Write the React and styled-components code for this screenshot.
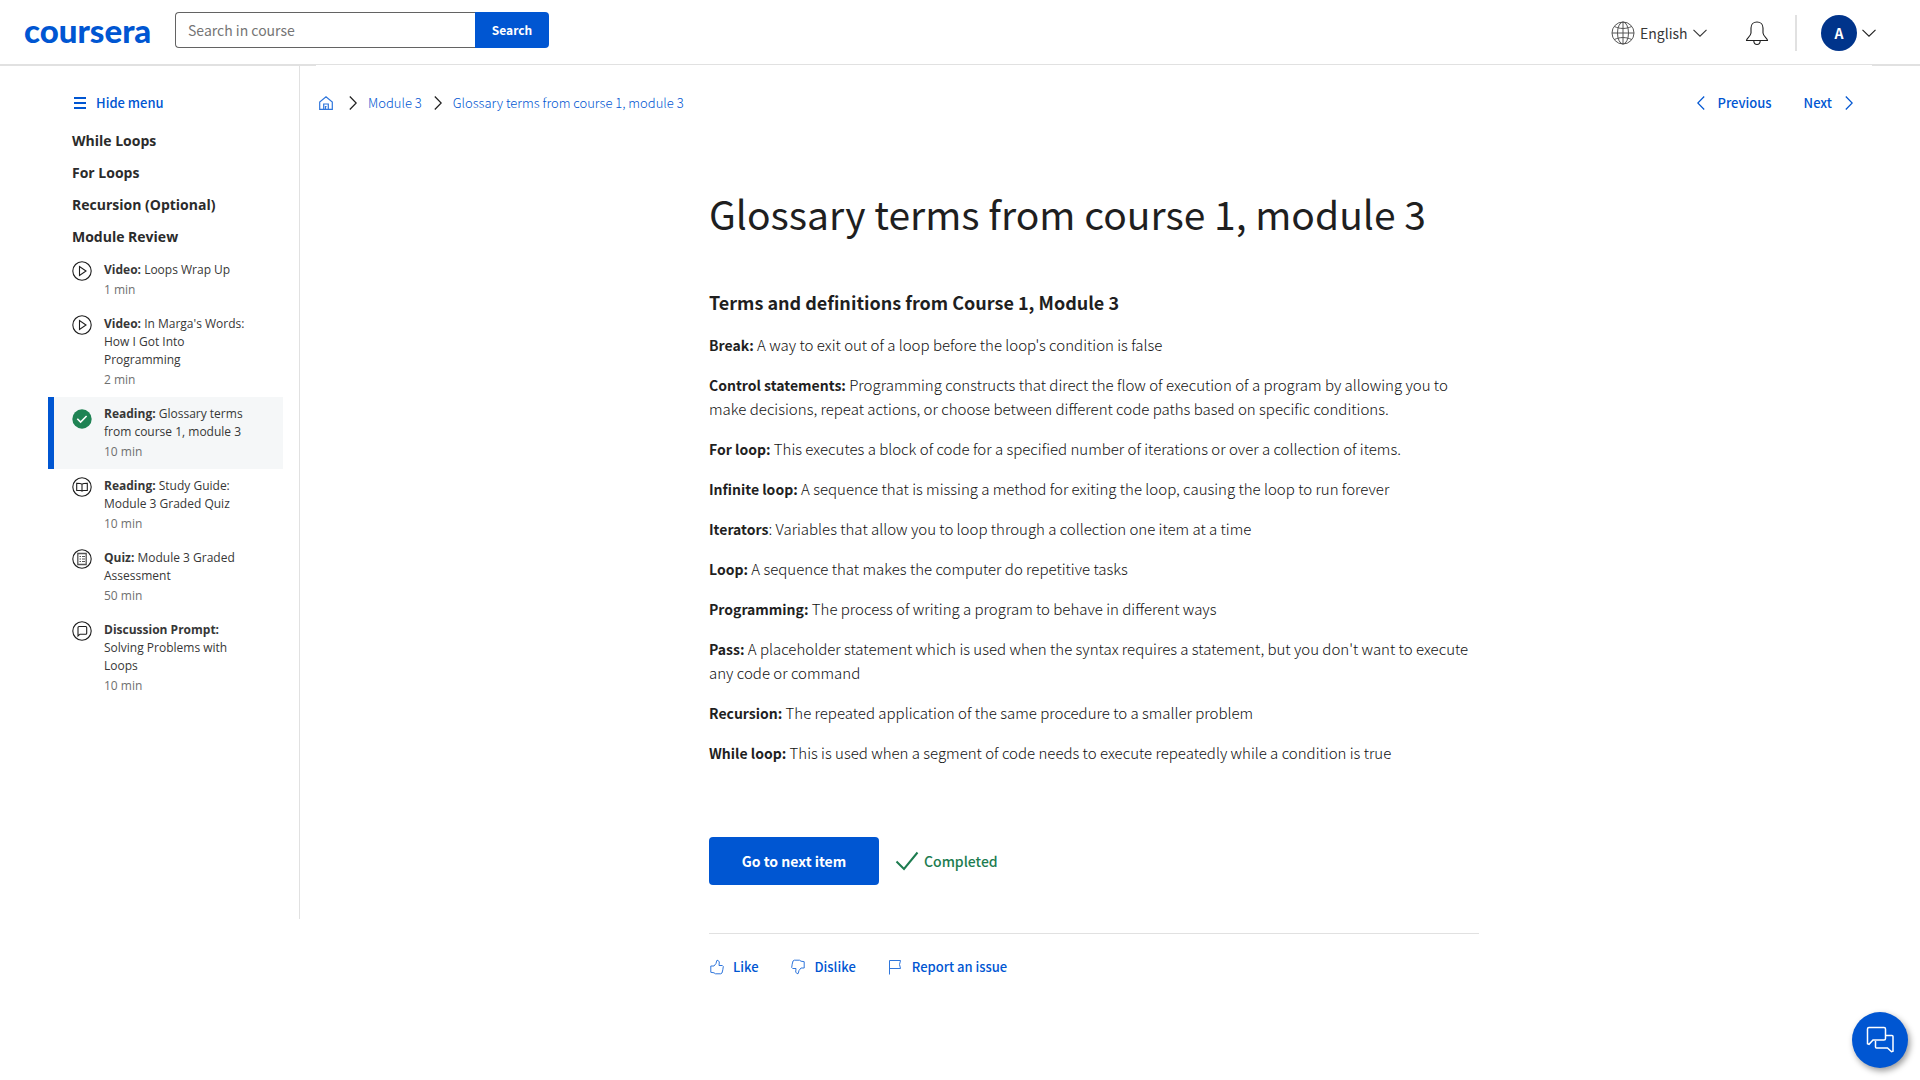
import React from "react";
import styled, { createGlobalStyle, css } from "styled-components";

const blue = "#0056d2";
const ink = "#1f1f1f";
const softInk = "#373737";
const grey = "#636363";
const green = "#1d7c50";
const line = "#e1e1e1";
const sans = '"Noto Sans CJK SC", "Open Sans", sans-serif';
const openSans = '"Open Sans", "Noto Sans", sans-serif';

const GlobalStyle = createGlobalStyle`
  *, *::before, *::after { box-sizing: border-box; }
  body { margin: 0; background: #fff; color: ${ink}; font: 400 14px/24px ${sans}; }
  h1, h2, h3, p, ul, ol { margin: 0; padding: 0; }
  ul, ol { list-style: none; }
  button, input, select { font: inherit; color: inherit; }
  button { border: 0; background: none; padding: 0; cursor: pointer; }
  a { color: ${blue}; text-decoration: none; }
  svg { display: block; flex: none; }
`;

const Header = styled.header`
  display: flex;
  align-items: flex-start;
  justify-content: space-between;
  height: 66px;
  padding: 12px 44px 0 24px;
  border-bottom: 2px solid ${line};
`;

const HeaderGroup = styled.div`
  display: flex;
  align-items: flex-start;
`;

const Logo = styled.a`
  width: 151px;
  font: 900 33px/36px Lato, sans-serif;
`;

const SearchForm = styled.form`
  display: flex;
  height: 36px;
`;

const SearchInput = styled.input`
  width: 300px;
  padding: 0 12px;
  border: 1px solid ${grey};
  border-right: 0;
  border-radius: 4px 0 0 4px;
  background: #fff;
  outline: 0;
  &::placeholder { color: #757575; opacity: 1; }
`;

const SearchButton = styled.button`
  width: 74px;
  border-radius: 0 4px 4px 0;
  background: ${blue};
  color: #fff;
  font-size: 12px;
  font-weight: 700;
`;

const AccountBar = styled.div`
  display: flex;
  align-items: center;
  padding-top: 3px;
`;

const Language = styled.label`
  display: flex;
  align-items: center;
  gap: 5px;
  margin-right: 38px;
  color: ${softInk};
`;

const LanguageSelect = styled.select`
  appearance: none;
  border: 0;
  padding: 0;
  background: none;
  outline: 0;
  height: 24px;
`;

const BellButton = styled.button`
  margin-right: 26px;
`;

const AccountButton = styled.button`
  display: flex;
  align-items: center;
  gap: 5px;
  padding-left: 24px;
  border-left: 2px solid ${line};
`;

const Avatar = styled.span`
  width: 36px;
  height: 36px;
  border-radius: 50%;
  background: #00348b;
  color: #fff;
  font-weight: 700;
  line-height: 36px;
  text-align: center;
`;

const Layout = styled.div`
  display: grid;
  grid-template-columns: 300px minmax(0, 1fr);
  align-items: start;
`;

const Sidebar = styled.aside`
  height: calc(100vh - 227px);
  padding: 25px 16px 0 48px;
  border-right: 1px solid ${line};
  font-family: ${openSans};
`;

const HideMenu = styled.button`
  display: flex;
  align-items: center;
  gap: 10px;
  height: 24px;
  margin: 0 0 10px 26px;
  color: ${blue};
  font: 500 13px/24px ${sans};
`;

const ModuleHeading = styled.h3`
  padding-left: 24px;
  color: #2b2b2b;
  font: 700 14px/32px ${openSans};
`;

const LessonLink = styled.a`
  display: flex;
  gap: 12px;
  padding: 8px 32px 8px 18px;
  border-left: 6px solid transparent;
  color: ${softInk};
  font-size: 12px;
  line-height: 18px;
  ${(p) =>
    p.$active &&
    css`
      border-left-color: ${blue};
      background: #f5f7f8;
      svg { margin-top: 4px; }
    `}
`;

const LessonTitle = styled.span`
  display: block;
`;

const Duration = styled.span`
  display: block;
  padding-top: 2px;
  color: #6f6f6f;
`;

const Main = styled.main`
  position: relative;
  margin: -1px 48px 0 16px;
  padding-top: 26px;
  background: #fff;
`;

const TopRow = styled.div`
  display: flex;
  justify-content: space-between;
  align-items: center;
  padding: 0 19px 0 3px;
  font-size: 13px;
`;

const Crumbs = styled.ol`
  display: flex;
  align-items: center;
  gap: 12px;
  font-weight: 300;
`;

const Crumb = styled.li`
  display: flex;
  align-items: center;
  gap: 11px;
`;

const HomeLink = styled.a`
  padding-right: 4px;
`;

const Pager = styled.div`
  display: flex;
  gap: 32px;
`;

const PagerLink = styled.a`
  display: flex;
  align-items: center;
  gap: 13px;
  font-weight: 500;
`;

const Article = styled.article`
  width: 770px;
  max-width: 100%;
  margin: 0 auto;
  padding-top: 70px;
`;

const Title = styled.h1`
  font-size: 39px;
  font-weight: 400;
  line-height: 56px;
`;

const Subtitle = styled.h2`
  margin: 49px 0 19px;
  font-size: 18px;
  font-weight: 700;
  line-height: 24px;
`;

const Term = styled.p`
  margin-bottom: 16px;
  color: #111;
  font-size: 15px;
  font-weight: 300;
  strong {
    color: ${ink};
    font-size: 14px;
    font-weight: 700;
    line-height: 1;
  }
`;

const Actions = styled.div`
  display: flex;
  align-items: center;
  gap: 16px;
  margin-top: 72px;
  padding-bottom: 48px;
  border-bottom: 1px solid ${line};
`;

const NextButton = styled.button`
  width: 170px;
  height: 48px;
  border-radius: 4px;
  background: ${blue};
  color: #fff;
  font-weight: 700;
`;

const Completed = styled.span`
  display: flex;
  align-items: center;
  gap: 5px;
  color: ${green};
  font-weight: 500;
`;

const Feedback = styled.div`
  display: flex;
  gap: 32px;
  padding-top: 21px;
`;

const FeedbackButton = styled.button`
  display: flex;
  align-items: center;
  gap: 8px;
  color: ${blue};
  font-size: 13px;
  font-weight: 500;
`;

const ChatButton = styled.button`
  position: fixed;
  right: 12px;
  bottom: 12px;
  display: grid;
  place-items: center;
  width: 56px;
  height: 56px;
  border-radius: 50%;
  background: ${blue};
  color: #fff;
  box-shadow: 2px 3px 6px rgba(0, 0, 0, 0.4);
`;

const Icon = ({ w, h = w, box = `0 0 ${w} ${h}`, sw = 1, children, ...rest }) => (
  <svg width={w} height={h} viewBox={box} fill="none" stroke="currentColor" strokeWidth={sw} aria-hidden="true" {...rest}>
    {children}
  </svg>
);

const Down = () => (
  <Icon w={14} h={8} sw={1.1}><path d="M.5.8 7 7.2 13.5.8" /></Icon>
);
const Right = () => (
  <Icon w={8} h={14} sw={1.2}><path d="M.8.5 7.2 7 .8 13.5" /></Icon>
);
const Left = () => (
  <Icon w={8} h={14} sw={1.2}><path d="M7.2.5.8 7l6.400 6.500" /></Icon>
);
const Globe = () => (
  <Icon w={24} stroke="#555">
    <circle cx="12" cy="12" r="11" />
    <ellipse cx="12" cy="12" rx="5.5" ry="11" />
    <path d="M12 1v22M1 12h22M3.500 5.500c5 2.600 12 2.600 17 0M3.500 18.500c5-2.600 12-2.600 17 0" />
  </Icon>
);
const Bell = () => (
  <Icon w={24} sw={1.1}>
    <path d="M1.500 19.500h21c0-2.500-4-3.500-4.500-7.500V7c0-3.500-2.500-6-6-6S6 3.500 6 7v5c-.5 4-4.500 5-4.500 7.500zM8.800 20c.3 4.600 6.100 4.600 6.400 0" />
  </Icon>
);
const Menu = () => (
  <Icon w={12} sw={2}><path d="M0 1h12M0 6h12M0 11h12" /></Icon>
);
const Home = () => (
  <Icon w={14} sw={1.2} stroke="#2f76dc">
    <path d="M.7 13.400V6L7 .8 13.300 6v7.400zM4.700 13.400V8h4.600v5.400M6.500 13V10.500h1" />
  </Icon>
);

const glyphs = {
  play: <path d="M7.500 5.500v9l6.500-4.500z" />,
  book: <path d="M10 7.200C9 6.300 7.500 6.200 4.700 6.200v7.300h3.800c.8 0 1.500.3 1.500 1 0-.7.700-1 1.500-1h3.800V6.200c-2.800 0-4.300.1-5.300 1zv7.200" />,
  quiz: (
    <g stroke="#555">
      <path d="M5.800 4.500h8.400v11H5.800z" strokeWidth="1.300" />
      <path d="M7.500 7.500H9M10 7.500h3M7.500 10H9M10 10h3M7.500 12.500H9M10 12.500h3" />
    </g>
  ),
  chat: <path d="M6 15V6.500c0-.7.300-1 1-1h6.700c.7 0 1 .3 1 1v5.700c0 .7-.3 1-1 1H8z" />,
};

const LessonIcon = ({ kind }) =>
  kind === "done" ? (
    <Icon w={20} sw={1.600}>
      <circle cx="10" cy="10" r="9.700" fill="#1f8354" stroke="none" />
      <path d="m5.300 9.700 3.300 3.300 6-6" stroke="#fff" />
    </Icon>
  ) : (
    <Icon w={20} stroke={ink} sw={1.1}>
      <circle cx="10" cy="10" r="9.200" />
      {glyphs[kind]}
    </Icon>
  );

const Check = () => (
  <Icon w={24} h={20} sw={2}><path d="m1.500 10.500 7.500 7.500L22.500 1.500" /></Icon>
);
const thumb = "M.8 6.500v6.300l3.200.5 1.500 1h5.200l1.300-.8.800-3.200.5-3.300-1-1H9l.3-3.500L8 .8 6.800 1 6 4 4 6.500z";
const ThumbUp = () => <Icon w={16} stroke="#2f76dc"><path d={thumb} transform="translate(1 .5)" /></Icon>;
const ThumbDown = () => <Icon w={16} stroke="#2f76dc"><path d={thumb} transform="rotate(180 8 8) translate(2 .5)" /></Icon>;
const Flag = () => (
  <Icon w={16} stroke="#2f76dc"><path d="M1.500 15.500V1.500h11l-1 4 1 4h-11" /></Icon>
);
const Chats = () => (
  <Icon w={28} sw={1.500}>
    <path d="M3 1.500h15q1.500 0 1.500 1.500v9.500q0 1.500-1.500 1.500H7l-4 4.300-1.500-.5V3Q1.500 1.500 3 1.500z" />
    <path d="M20 9.500h6q1 0 1 1v14.700l-1.500.5-4-3.700H10.500q-1 0-1-1V15" />
  </Icon>
);

const lessons = [
  { kind: "play", type: "Video:", title: "Loops Wrap Up", time: "1 min" },
  { kind: "play", type: "Video:", title: "In Marga's Words: How I Got Into Programming", time: "2 min" },
  { kind: "done", type: "Reading:", title: "Glossary terms from course 1, module 3", time: "10 min", active: true },
  { kind: "book", type: "Reading:", title: "Study Guide: Module 3 Graded Quiz", time: "10 min" },
  { kind: "quiz", type: "Quiz:", title: "Module 3 Graded Assessment", time: "50 min" },
  { kind: "chat", type: "Discussion Prompt:", title: "Solving Problems with Loops", time: "10 min" },
];

const terms = [
  ["Break:", " A way to exit out of a loop before the loop's condition is false"],
  ["Control statements:", " Programming constructs that direct the flow of execution of a program by allowing you to make decisions, repeat actions, or choose between different code paths based on specific conditions."],
  ["For loop:", " This executes a block of code for a specified number of iterations or over a collection of items."],
  ["Infinite loop:", " A sequence that is missing a method for exiting the loop, causing the loop to run forever"],
  ["Iterators", ": Variables that allow you to loop through a collection one item at a time"],
  ["Loop:", " A sequence that makes the computer do repetitive tasks"],
  ["Programming:", " The process of writing a program to behave in different ways"],
  ["Pass:", " A placeholder statement which is used when the syntax requires a statement, but you don't want to execute any code or command"],
  ["Recursion:", " The repeated application of the same procedure to a smaller problem"],
  ["While loop:", " This is used when a segment of code needs to execute repeatedly while a condition is true"],
];

export default function App() {
  return (
    <>
      <GlobalStyle />
      <Header>
        <HeaderGroup>
          <Logo href="#">coursera</Logo>
          <SearchForm role="search" onSubmit={(e) => e.preventDefault()}>
            <SearchInput type="text" placeholder="Search in course" aria-label="Search in course" />
            <SearchButton type="submit">Search</SearchButton>
          </SearchForm>
        </HeaderGroup>
        <AccountBar>
          <Language>
            <Globe />
            <LanguageSelect aria-label="Language" defaultValue="English">
              <option>English</option>
            </LanguageSelect>
            <Down />
          </Language>
          <BellButton aria-label="Notifications"><Bell /></BellButton>
          <AccountButton aria-label="Account menu">
            <Avatar>A</Avatar>
            <Down />
          </AccountButton>
        </AccountBar>
      </Header>
      <Layout>
        <Sidebar>
          <HideMenu><Menu />Hide menu</HideMenu>
          {["While Loops", "For Loops", "Recursion (Optional)", "Module Review"].map((name) => (
            <ModuleHeading key={name}>{name}</ModuleHeading>
          ))}
          <ul>
            {lessons.map((l) => (
              <li key={l.title}>
                <LessonLink href="#" $active={l.active}>
                  <LessonIcon kind={l.kind} />
                  <span>
                    <LessonTitle><strong>{l.type}</strong> {l.title}</LessonTitle>
                    <Duration>{l.time}</Duration>
                  </span>
                </LessonLink>
              </li>
            ))}
          </ul>
        </Sidebar>
        <Main>
          <TopRow>
            <nav aria-label="Breadcrumb">
              <Crumbs>
                <Crumb><HomeLink href="#" aria-label="Home"><Home /></HomeLink></Crumb>
                <Crumb><Right /><a href="#">Module 3</a></Crumb>
                <Crumb><Right /><a href="#">Glossary terms from course 1, module 3</a></Crumb>
              </Crumbs>
            </nav>
            <Pager>
              <PagerLink href="#"><Left />Previous</PagerLink>
              <PagerLink href="#">Next<Right /></PagerLink>
            </Pager>
          </TopRow>
          <Article>
            <Title>Glossary terms from course 1, module 3</Title>
            <Subtitle>Terms and definitions from Course 1, Module 3</Subtitle>
            {terms.map(([name, text]) => (
              <Term key={name}><strong>{name}</strong>{text}</Term>
            ))}
            <Actions>
              <NextButton>Go to next item</NextButton>
              <Completed><Check />Completed</Completed>
            </Actions>
            <Feedback>
              <FeedbackButton><ThumbUp />Like</FeedbackButton>
              <FeedbackButton><ThumbDown />Dislike</FeedbackButton>
              <FeedbackButton><Flag />Report an issue</FeedbackButton>
            </Feedback>
          </Article>
        </Main>
      </Layout>
      <ChatButton aria-label="Open chat"><Chats /></ChatButton>
    </>
  );
}
